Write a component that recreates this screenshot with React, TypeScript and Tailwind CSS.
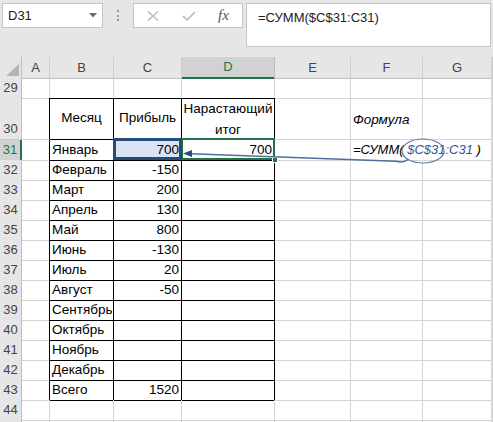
import React from "react";

const GRID = "grid grid-cols-[22px_28px_64px_68px_93px_76px_72px_69px_1fr]";
const LETTERS = ["A", "B", "C", "D", "E", "F", "G", ""];

type Row = { n: number; b?: string; c?: string; d?: string };

const rows: Row[] = [
    { n: 29 },
    { n: 30 },
    { n: 31, b: "Январь", c: "700", d: "700" },
    { n: 32, b: "Февраль", c: "-150" },
    { n: 33, b: "Март", c: "200" },
    { n: 34, b: "Апрель", c: "130" },
    { n: 35, b: "Май", c: "800" },
    { n: 36, b: "Июнь", c: "-130" },
    { n: 37, b: "Июль", c: "20" },
    { n: 38, b: "Август", c: "-50" },
    { n: 39, b: "Сентябрь" },
    { n: 40, b: "Октябрь" },
    { n: 41, b: "Ноябрь" },
    { n: 42, b: "Декабрь" },
    { n: 43, b: "Всего", c: "1520" },
    { n: 44 },
    { n: 45 },
];

// col index: 1 = A ... 8 = H
const inTable = (n: number) => n >= 30 && n <= 43;

const cellBorders = (n: number, i: number) => {
    const right =
        n === 31 && i === 6
            ? "border-r-white"
            : inTable(n) && i >= 1 && i <= 4
            ? "border-r-black"
            : "border-r-[#d4d4d4]";
    const bottom =
        n >= 29 && n <= 43 && i >= 2 && i <= 4 ? "border-b-black" : "border-b-[#d4d4d4]";
    return `${right} ${bottom}`;
};

const cellContent = (row: Row, i: number) => {
    if (row.n === 30) {
        if (i === 2) return <span className="m-auto">Месяц</span>;
        if (i === 3) return <span className="m-auto">Прибыль</span>;
        if (i === 4)
            return <span className="m-auto text-center leading-[21px]">Нарастающий итог</span>;
        if (i === 6) return <span className="pl-[2px] pt-[3px] italic">Формула</span>;
        return null;
    }
    if (i === 2 && row.b) return <span className="pl-[2px]">{row.b}</span>;
    if (i === 3 && row.c) return <span className="ml-auto pr-[2px]">{row.c}</span>;
    if (i === 4 && row.d) return <span className="ml-auto pr-[2px]">{row.d}</span>;
    if (row.n === 31 && i === 6)
        return (
            <span className="pl-[2px] italic whitespace-nowrap text-[13px]">
                =СУММ( <span className="text-[#2f5597]">$C$31:C31</span> )
            </span>
        );
    return null;
};

const TopBar = () => (
    <div className="h-[57px] bg-[#e6e6e6] flex items-start">
        <div className="ml-[2px] mt-[3px] w-[101px] h-[25px] bg-white border border-[#c6c6c6] flex items-center justify-between pl-[5px] pr-[5px]">
            <span className="text-[13px] text-[#222]">D31</span>
            <svg width="8" height="5" viewBox="0 0 8 5">
                <polygon points="0,0 8,0 4,4.5" fill="#6b6b6b" />
            </svg>
        </div>
        <div className="w-[30px] mt-[10px] flex flex-col items-center gap-[2.5px]">
            <span className="w-[2px] h-[2px] bg-[#9b9b9b]" />
            <span className="w-[2px] h-[2px] bg-[#9b9b9b]" />
            <span className="w-[2px] h-[2px] bg-[#9b9b9b]" />
        </div>
        <div className="mt-[3px] w-[110px] h-[25px] bg-white border border-[#c6c6c6] flex items-center pl-[13px]">
            <svg width="12" height="10" viewBox="0 0 12 10">
                <path d="M1 0.5 L11 9.5 M11 0.5 L1 9.5" stroke="#b9b9b9" strokeWidth="1.4" fill="none" />
            </svg>
            <svg className="ml-[23px]" width="14" height="10" viewBox="0 0 14 10">
                <path d="M1 5 L5 9 L13 1" stroke="#b9b9b9" strokeWidth="1.6" fill="none" />
            </svg>
            <span className="ml-[22px] font-['Liberation_Serif',serif] italic text-[15px] text-[#555] leading-none">
                fx
            </span>
        </div>
        <div className="mt-[3px] ml-[3px] mr-[2px] flex-1 h-[44px] bg-white border border-[#c6c6c6] pl-[11px] pt-[4px] text-[13px] text-[#222]">
            =СУММ($C$31:C31)
        </div>
    </div>
);

const HeaderRow = () => (
    <div className={`${GRID} h-[21px] bg-[#e6e6e6]`}>
        <div className="border-r border-b border-r-[#bdbdbd] border-b-[#bdbdbd] flex items-end justify-end pr-[2px] pb-[2px]">
            <svg width="13" height="12" viewBox="0 0 13 12">
                <polygon points="0,12 13,12 13,0" fill="#b4b4b4" />
            </svg>
        </div>
        {LETTERS.map((l, i) =>
            l === "D" ? (
                <div
                    key={i}
                    className="bg-[#d2d2d2] border-r border-r-[#bdbdbd] border-b-2 border-b-[#217346] flex items-center justify-center text-[13px] text-[#217346]"
                >
                    {l}
                </div>
            ) : (
                <div
                    key={i}
                    className="border-r border-b border-r-[#d0d0d0] border-b-[#bdbdbd] flex items-center justify-center text-[13px] text-[#444]"
                >
                    {l}
                </div>
            )
        )}
    </div>
);

export default function App() {
    return (
        <div className="relative w-[493px] h-[422px] overflow-hidden bg-white font-['Liberation_Sans',Arial,sans-serif]">
            <TopBar />
            <HeaderRow />
            {rows.map(row => (
                <div key={row.n} className={`${GRID} ${row.n === 30 ? "h-[42px]" : "h-[20px]"}`}>
                    {row.n === 31 ? (
                        <div className="bg-[#d2d2d2] border-r-2 border-b border-r-[#217346] border-b-[#c8c8c8] flex items-center justify-center text-[13px] text-[#217346]">
                            {row.n}
                        </div>
                    ) : (
                        <div
                            className={`bg-[#e6e6e6] border-r border-b border-r-[#bdbdbd] border-b-[#c8c8c8] flex justify-center text-[13px] text-[#444] ${
                                row.n === 30 ? "items-end pb-[1px]" : "items-center"
                            }`}
                        >
                            {row.n === 45 ? "" : row.n}
                        </div>
                    )}
                    {[1, 2, 3, 4, 5, 6, 7, 8].map(i => (
                        <div
                            key={i}
                            className={`border-r border-b ${cellBorders(row.n, i)} flex items-center text-[13.5px] text-black ${
                                row.n === 31 && i === 3 ? "bg-[#dae3f3]" : ""
                            } ${row.n === 31 && i === 6 ? "overflow-visible relative z-10" : "overflow-hidden"}`}
                        >
                            {cellContent(row, i)}
                        </div>
                    ))}
                </div>
            ))}

            {/* active cell D31 */}
            <div className="absolute left-[181px] top-[138px] w-[94px] h-[22px] border-2 border-[#217346]" />
            <div className="absolute left-[272px] top-[157px] w-[6px] h-[6px] bg-[#217346] border border-white" />
            {/* precedent C31 */}
            <div className="absolute left-[113px] top-[138px] w-[69px] h-[22px] border-[3px] border-[#264b78]" />

            <svg className="absolute left-0 top-0 pointer-events-none z-20" width="493" height="422">
                <ellipse cx="423" cy="151" rx="21" ry="12" fill="none" stroke="#5a7cac" strokeWidth="1.2" />
                <path
                    d="M408 159.5 Q403 163.5 396 161.3 L191 153.8"
                    fill="none"
                    stroke="#4d6f9c"
                    strokeWidth="1.5"
                />
                <polygon points="183,153.5 192,150 192,157" fill="#2c4c76" />
            </svg>
        </div>
    );
}
